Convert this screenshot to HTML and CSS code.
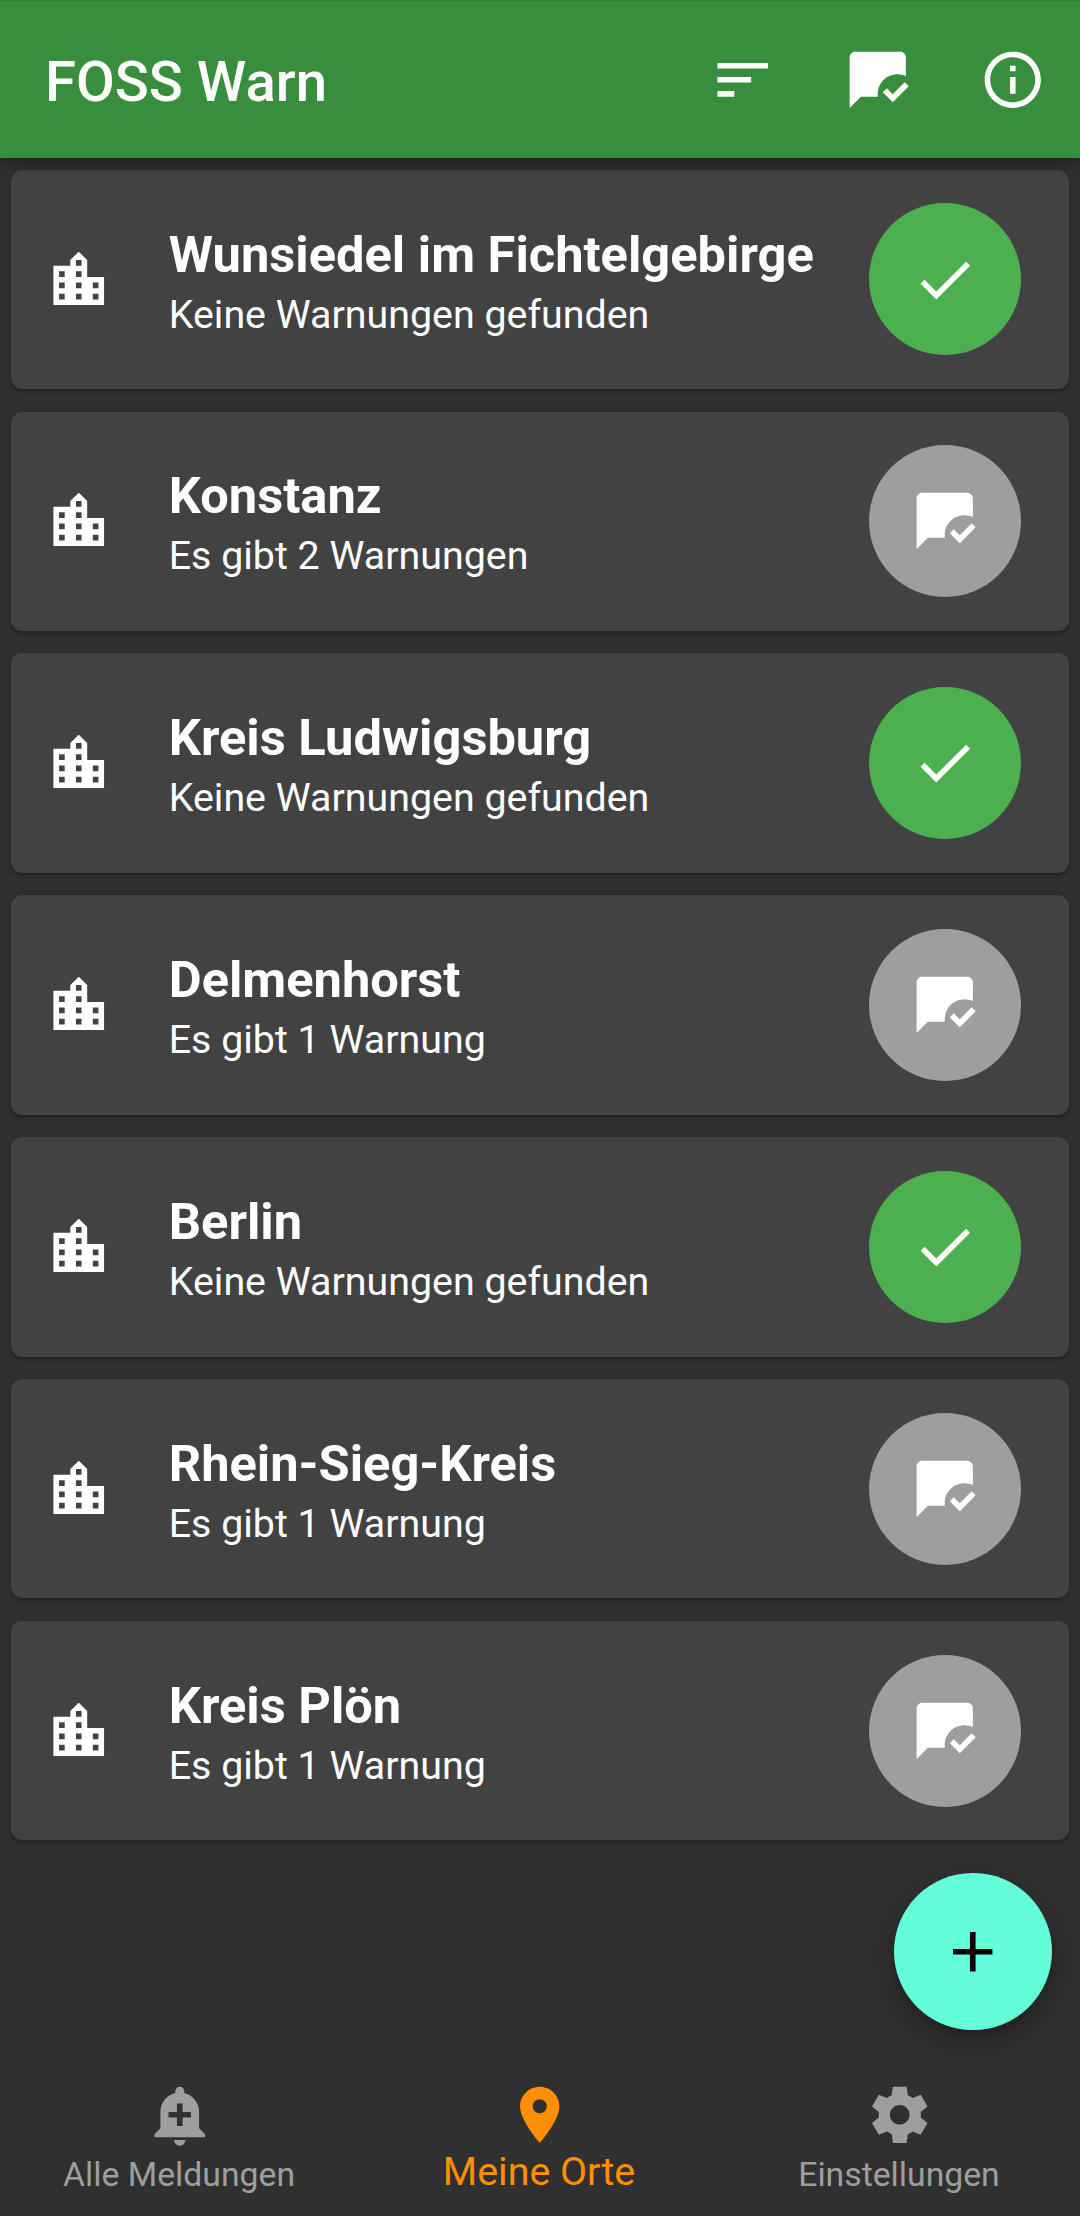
FILE: index.html
```html
<!DOCTYPE html>
<html lang="de">
<head>
<meta charset="utf-8">
<title>FOSS Warn</title>
<link rel="stylesheet" href="styles.css">
</head>
<body>
<svg class="sprite" aria-hidden="true">
  <symbol id="city" viewBox="0 0 24 24"><path d="M15 11V5l-3-3-3 3v2H3v14h18V11h-6zm-8 8H5v-2h2v2zm0-4H5v-2h2v2zm0-4H5V9h2v2zm6 8h-2v-2h2v2zm0-4h-2v-2h2v2zm0-4h-2V9h2v2zm0-4h-2V5h2v2zm6 12h-2v-2h2v2zm0-4h-2v-2h2v2z"/></symbol>
  <symbol id="check" viewBox="0 0 24 24"><path d="M9 16.17L4.83 12l-1.42 1.41L9 19 21 7l-1.41-1.41z"/></symbol>
  <symbol id="read" viewBox="0 0 24 24"><path d="M12 18v-1c0-3.87 3.13-7 7-7 1.08 0 2.09.25 3 .68V4c0-1.1-.9-2-2-2H4c-1.1 0-2 .9-2 2v18l4-4h6zM23 14.34L17.34 20l-3.54-3.54 1.41-1.41 2.12 2.12 4.24-4.24L23 14.34z"/></symbol>
</svg>
<div class="app">
  <header class="bar">
    <h1 class="bar-title">FOSS Warn</h1>
    <div class="actions">
      <button class="action" aria-label="Sortieren"><svg class="icon" viewBox="0 0 24 24"><path d="M3 18h6v-2H3v2zM3 6v2h18V6H3zm0 7h12v-2H3v2z"/></svg></button>
      <button class="action" aria-label="Alle gelesen"><svg class="icon"><use href="#read"/></svg></button>
      <button class="action" aria-label="Info"><svg class="icon" viewBox="0 0 24 24"><path d="M11 7h2v2h-2zm0 4h2v6h-2zm1-9C6.48 2 2 6.48 2 12s4.480 10 10 10 10-4.480 10-10S17.520 2 12 2zm0 18c-4.410 0-8-3.590-8-8s3.590-8 8-8 8 3.590 8 8-3.590 8-8 8z"/></svg></button>
    </div>
  </header>
  <main class="places">
    <article class="card"><svg class="icon"><use href="#city"/></svg><div class="text"><h2 class="name">Wunsiedel im Fichtelgebirge</h2><p class="status">Keine Warnungen gefunden</p></div><span class="badge ok"><svg class="icon"><use href="#check"/></svg></span></article>
    <article class="card"><svg class="icon"><use href="#city"/></svg><div class="text"><h2 class="name">Konstanz</h2><p class="status">Es gibt 2 Warnungen</p></div><span class="badge"><svg class="icon"><use href="#read"/></svg></span></article>
    <article class="card"><svg class="icon"><use href="#city"/></svg><div class="text"><h2 class="name">Kreis Ludwigsburg</h2><p class="status">Keine Warnungen gefunden</p></div><span class="badge ok"><svg class="icon"><use href="#check"/></svg></span></article>
    <article class="card"><svg class="icon"><use href="#city"/></svg><div class="text"><h2 class="name">Delmenhorst</h2><p class="status">Es gibt 1 Warnung</p></div><span class="badge"><svg class="icon"><use href="#read"/></svg></span></article>
    <article class="card"><svg class="icon"><use href="#city"/></svg><div class="text"><h2 class="name">Berlin</h2><p class="status">Keine Warnungen gefunden</p></div><span class="badge ok"><svg class="icon"><use href="#check"/></svg></span></article>
    <article class="card"><svg class="icon"><use href="#city"/></svg><div class="text"><h2 class="name">Rhein-Sieg-Kreis</h2><p class="status">Es gibt 1 Warnung</p></div><span class="badge"><svg class="icon"><use href="#read"/></svg></span></article>
    <article class="card"><svg class="icon"><use href="#city"/></svg><div class="text"><h2 class="name">Kreis Plön</h2><p class="status">Es gibt 1 Warnung</p></div><span class="badge"><svg class="icon"><use href="#read"/></svg></span></article>
  </main>
  <button class="fab" aria-label="Ort hinzufügen"><svg class="icon" viewBox="0 0 24 24"><path d="M19 13h-6v6h-2v-6H5v-2h6V5h2v6h6v2z"/></svg></button>
  <nav class="nav">
    <a class="tab"><svg class="icon" viewBox="0 0 24 24"><path d="M10.010 21.010c0 1.100.89 1.990 1.990 1.990s1.990-.89 1.990-1.990h-3.980zm8.870-4.190V11c0-3.250-2.250-5.970-5.290-6.690v-.72C13.590 2.710 12.880 2 12 2s-1.590.71-1.590 1.590v.72C7.370 5.030 5.120 7.750 5.120 11v5.820L3 18.940V20h18v-1.060l-2.120-2.120zM16 13.010h-3v3h-2v-3H8V11h3V8h2v3h3v2.010z"/></svg><span class="label">Alle Meldungen</span></a>
    <a class="tab active"><svg class="icon" viewBox="0 0 24 24"><path d="M12 2C8.130 2 5 5.130 5 9c0 5.250 7 13 7 13s7-7.750 7-13c0-3.870-3.130-7-7-7zm0 9.500c-1.380 0-2.500-1.120-2.500-2.500s1.120-2.500 2.500-2.500 2.500 1.120 2.500 2.500-1.120 2.500-2.500 2.500z"/></svg><span class="label">Meine Orte</span></a>
    <a class="tab"><svg class="icon" viewBox="0 0 24 24"><path d="M19.440 12.990l-.010.020c.040-.330.080-.670.080-1.010 0-.340-.030-.660-.070-.990l.010.020 2.440-1.920-2.430-4.220-2.870 1.160.010.010c-.520-.400-1.090-.740-1.710-1h.010L14.440 2H9.570l-.440 3.070h.010c-.620.260-1.190.600-1.710 1l.010-.010-2.880-1.170-2.440 4.220 2.440 1.920.010-.020c-.040.330-.070.650-.070.990 0 .340.030.680.080 1.010l-.010-.020-2.100 1.650-.330.260 2.430 4.200 2.880-1.150-.020-.040c.530.410 1.100.750 1.730 1.010h-.030L9.580 22h4.850s.030-.180.060-.420l.380-2.650h-.010c.620-.260 1.200-.600 1.730-1.010l-.020.040 2.880 1.150 2.430-4.200s-.140-.120-.330-.260l-2.110-1.660zM12 15.500c-1.930 0-3.500-1.570-3.500-3.500s1.570-3.500 3.500-3.500 3.500 1.570 3.500 3.500-1.570 3.500-3.500 3.500z"/></svg><span class="label">Einstellungen</span></a>
  </nav>
</div>
</body>
</html>
```
FILE: styles.css
```css
* { box-sizing: border-box; }

body {
  margin: 0;
  background: #303030;
  color: #fff;
  font-family: Roboto, "Liberation Sans", sans-serif;
}

h1, h2, p { margin: 0; }

button {
  padding: 0;
  border: 0;
  background: none;
  color: inherit;
  font: inherit;
}

.sprite { display: none; }

.icon {
  display: block;
  flex: none;
  width: 67.5px;
  height: 67.5px;
  fill: currentColor;
}

.app {
  position: relative;
  display: flex;
  flex-direction: column;
  height: 2216px;
  overflow: hidden;
}

.bar {
  position: relative;
  z-index: 1;
  display: flex;
  flex: none;
  align-items: center;
  justify-content: space-between;
  height: 158.4px;
  padding-top: 1px;
  padding-left: 45px;
  border-top: 1px solid #327e36;
  background: #388e3c;
  box-shadow: 0 5.6px 11px -3px rgba(0, 0, 0, .2), 0 6px 14px rgba(0, 0, 0, .14), 0 3px 20px rgba(0, 0, 0, .08);
}

.bar-title {
  padding-top: 3px;
  font-size: 56.25px;
  font-weight: 500;
  line-height: 66px;
}

.actions { display: flex; }

.action {
  display: grid;
  place-items: center;
  width: 135px;
  height: 135px;
}

.places {
  display: flex;
  flex: 1;
  flex-direction: column;
  gap: 22.5px;
  padding: 11.25px;
}

.card {
  display: flex;
  flex: none;
  align-items: center;
  height: 219.4px;
  padding: 0 48px 0 33.75px;
  border-radius: 11.25px;
  background: #424242;
  box-shadow: 0 2.8px 2.8px rgba(0, 0, 0, .2), 0 1px 5px rgba(0, 0, 0, .14);
}

.text {
  flex: 1;
  padding-top: 10.4px;
  padding-left: 56.25px;
  white-space: nowrap;
}

.name {
  font-size: 50.625px;
  font-weight: 700;
  line-height: 60px;
}

.status {
  font-size: 39.375px;
  line-height: 60px;
}

.badge {
  display: grid;
  place-items: center;
  width: 152px;
  height: 152px;
  border-radius: 50%;
  background: #9e9e9e;
}

.ok { background: #4caf50; }

.fab {
  position: absolute;
  right: 28.5px;
  bottom: 185.75px;
  z-index: 1;
  display: grid;
  place-items: center;
  width: 157.5px;
  height: 157.5px;
  border-radius: 50%;
  background: #64ffda;
  color: #000;
  box-shadow: 0 8.4px 14px -2.8px rgba(0, 0, 0, .2), 0 14px 24px rgba(0, 0, 0, .14), 0 2.8px 30px rgba(0, 0, 0, .06);
}

.nav {
  display: flex;
  flex: none;
  height: 162px;
  background: #303030;
}

.tab {
  display: flex;
  flex: 1;
  flex-direction: column;
  align-items: center;
  padding-top: 27px;
  color: #9e9e9e;
}

.label {
  padding-top: 3px;
  padding-right: 2px;
  font-size: 33.75px;
  line-height: 46px;
}

.active { color: #ff8f00; }

.active .label {
  padding-top: 0;
  font-size: 39.375px;
}
```
